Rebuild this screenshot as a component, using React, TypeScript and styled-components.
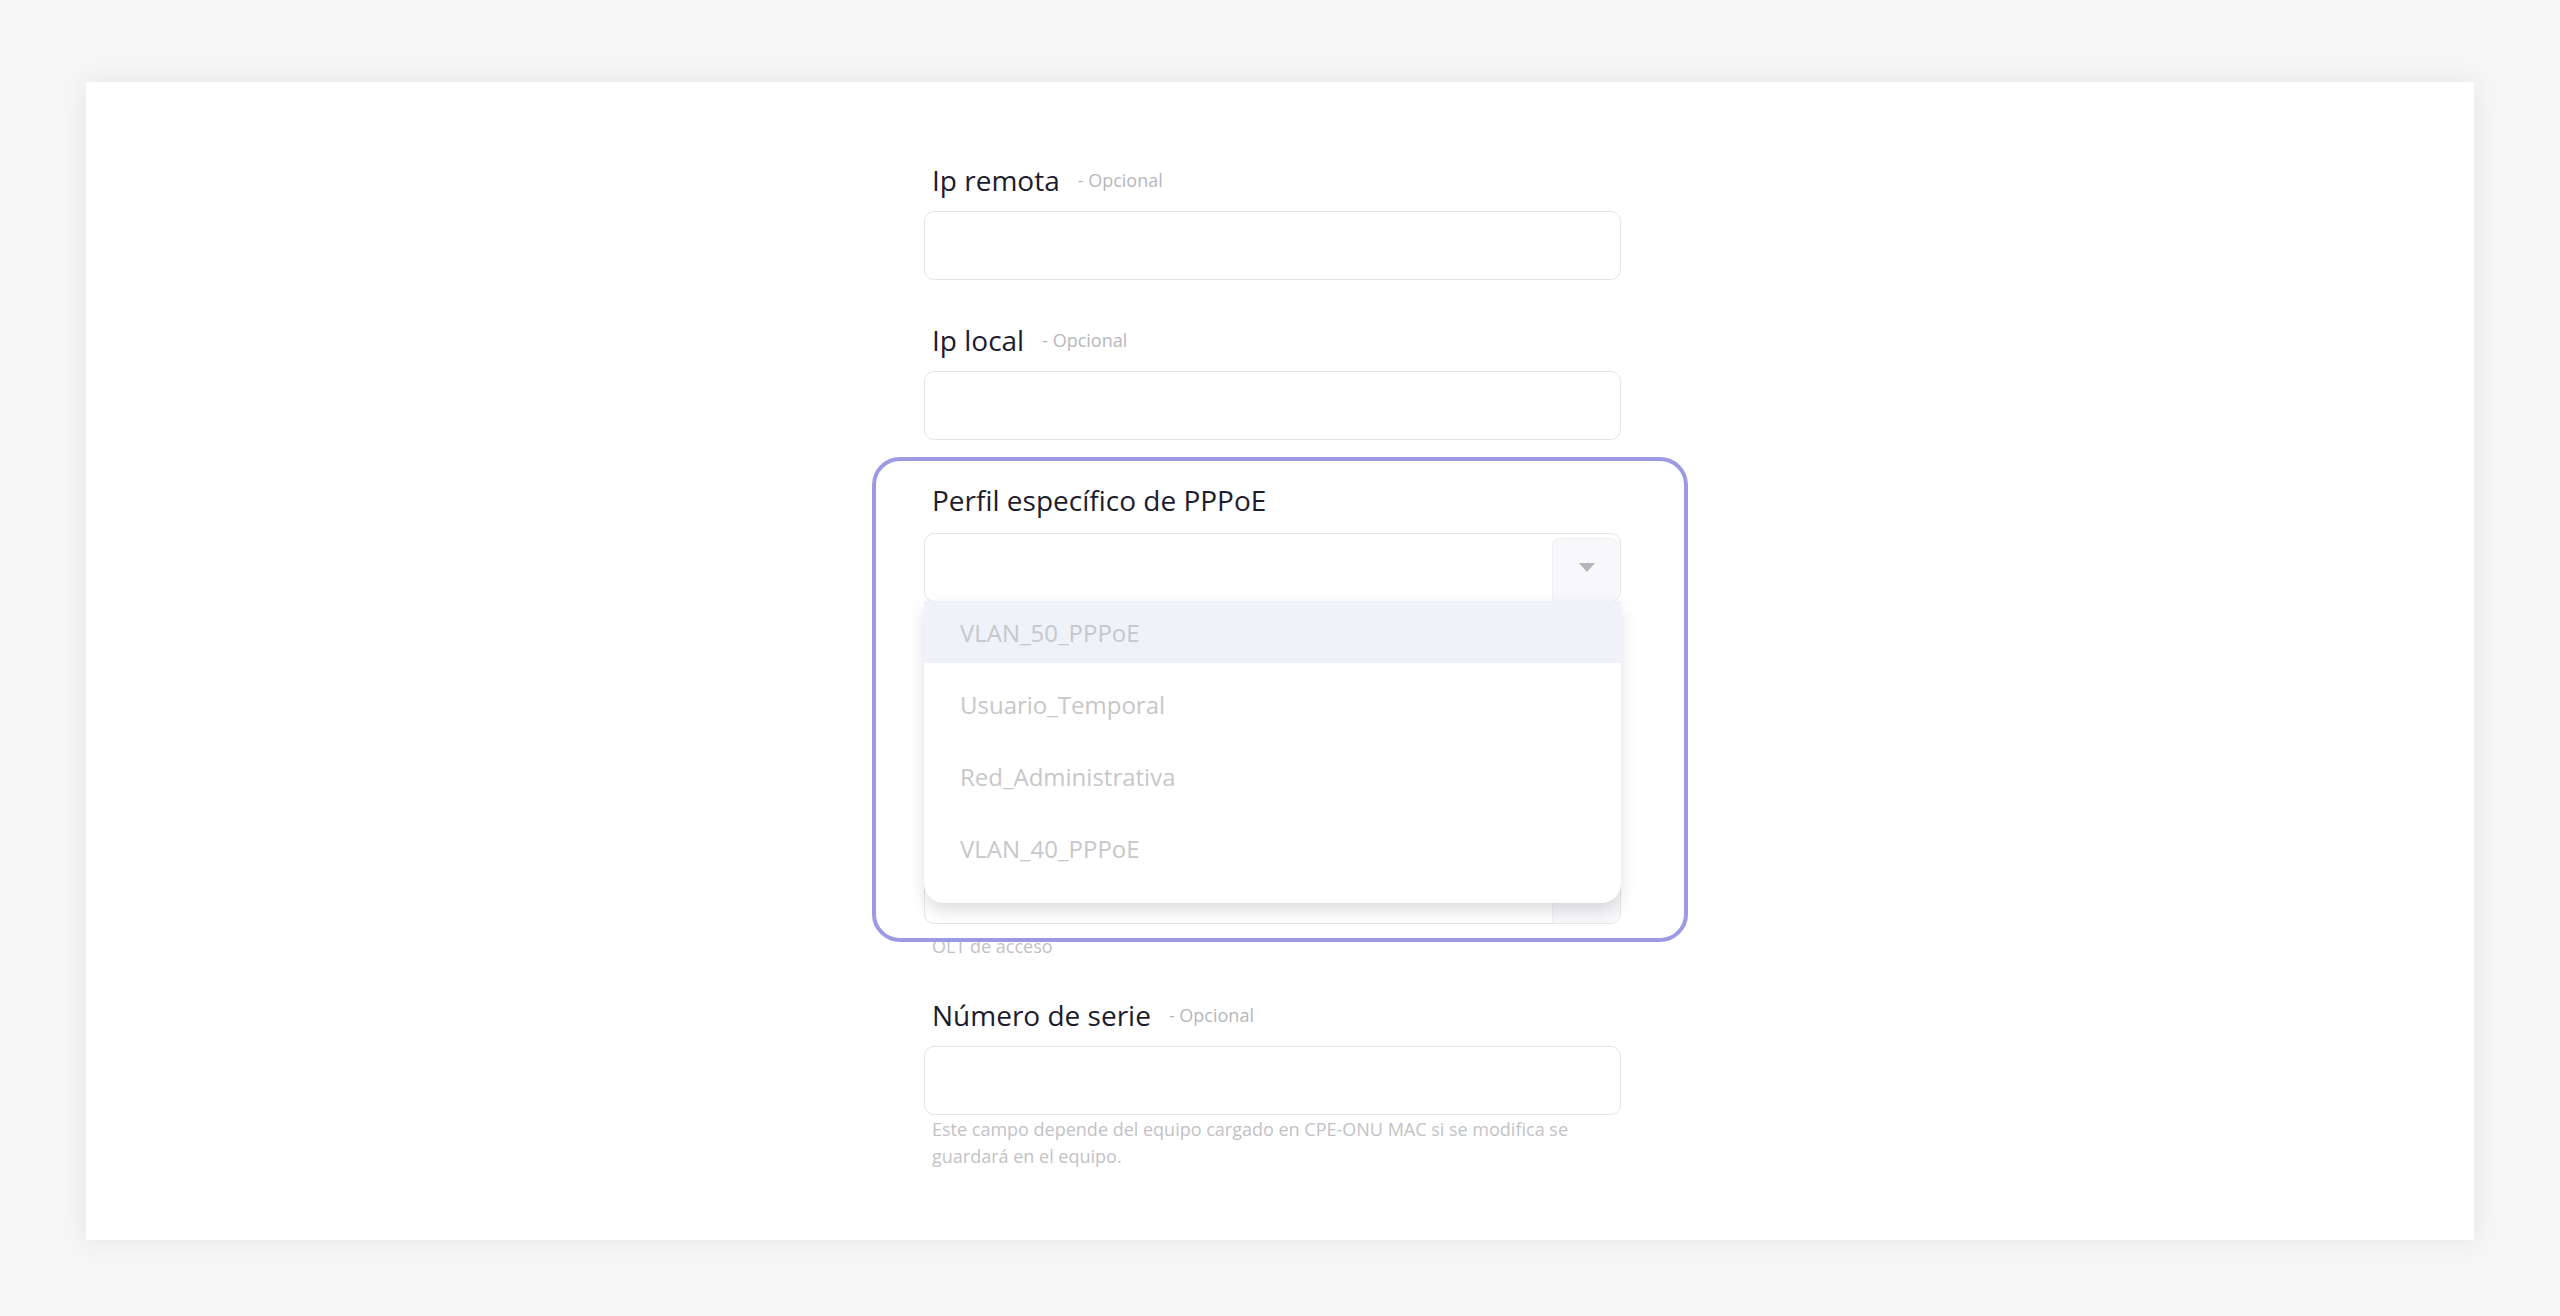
import React, { FC } from "react";
import styled, { createGlobalStyle } from "styled-components";

const GlobalStyle = createGlobalStyle`
    body {
        margin: 0;
        background-color: #f6f6f6;
        font-family: "Open Sans", "Noto Sans", sans-serif;
    }
`;

const Page = styled.div`
    box-sizing: border-box;
    min-height: 100vh;
    padding: 82px 0 0 86px;
`;

const Card = styled.div`
    box-sizing: border-box;
    width: 2388px;
    height: 1158px;
    padding: 77px 0 0 838px;
    background-color: #fff;
    box-shadow: 0 0 26px rgba(0, 0, 0, 0.07);
`;

const Form = styled.div`
    display: flex;
    flex-direction: column;
    width: 697px;
`;

interface FieldProps {
    $spacing?: number;
}

const Field = styled.div<FieldProps>`
    position: relative;
    padding-bottom: ${props => props.$spacing ?? 40}px;
`;

const LabelRow = styled.div<{ $gap?: number }>`
    display: flex;
    align-items: center;
    gap: 18px;
    height: 42px;
    margin-bottom: ${props => props.$gap ?? 10}px;
    padding-left: 8px;
`;

const LabelText = styled.span`
    font-size: 28px;
    line-height: 42px;
    color: #1d1c2d;
`;

const Optional = styled.span`
    font-size: 18px;
    line-height: 27px;
    color: #b7b7bc;
`;

const TextInput = styled.input`
    box-sizing: border-box;
    display: block;
    width: 100%;
    height: 69px;
    margin: 0;
    padding: 0 20px;
    border: 1px solid #e4e4e9;
    border-radius: 10px;
    background-color: #fff;
    outline: none;
`;

const SelectBox = styled.div`
    position: relative;
    box-sizing: border-box;
    display: flex;
    height: 69px;
    border: 1px solid #e4e4e9;
    border-radius: 10px;
    background-color: #fff;
`;

const SelectValue = styled.div`
    flex: 1;
`;

const ArrowPanel = styled.div`
    display: flex;
    align-items: center;
    justify-content: center;
    width: 68px;
    margin-top: 4px;
    padding-bottom: 6px;
    box-sizing: border-box;
    background-color: #f8f8fb;
    border-left: 1px solid #efeff3;
    border-top: 1px solid #efeff3;
    border-radius: 8px 10px 10px 0;
`;

const Menu = styled.div`
    position: absolute;
    top: 100%;
    left: -1px;
    right: -1px;
    z-index: 2;
    display: flex;
    flex-direction: column;
    gap: 10px;
    padding-bottom: 24px;
    background-color: #fff;
    border-radius: 0 0 20px 20px;
    box-shadow: 0 8px 16px rgba(0, 0, 0, 0.13);
`;

interface MenuItemProps {
    $active?: boolean;
}

const MenuItem = styled.div<MenuItemProps>`
    display: flex;
    align-items: center;
    height: 62px;
    padding-left: 36px;
    font-size: 24px;
    color: #c7c7cb;
    background-color: ${props => props.$active ? '#eff2f9' : 'transparent'};
`;

const HelpText = styled.div<{ $gap: number }>`
    margin-top: ${props => props.$gap}px;
    padding-left: 8px;
    padding-right: 20px;
    font-size: 18px;
    line-height: 27px;
    color: #c2c2c6;
`;

const Highlight = styled.div`
    position: absolute;
    top: -22px;
    left: -52px;
    z-index: 3;
    box-sizing: border-box;
    width: 816px;
    height: 485px;
    border: 4px solid #9c9ae3;
    border-radius: 28px;
    pointer-events: none;
`;

const Arrow: FC = () => (
    <svg width="16" height="9" viewBox="0 0 16 9">
        <path d="M0 0 H16 L8 9 Z" fill="#b4b4b9" />
    </svg>
);

interface LabelProps {
    text?: string;
    optional?: boolean;
    gap?: number;
}

const Label: FC<LabelProps> = ({ text, optional, gap }) => (
    <LabelRow $gap={gap}>
        {text && <LabelText>{text}</LabelText>}
        {optional && <Optional>- Opcional</Optional>}
    </LabelRow>
);

const options = ["VLAN_50_PPPoE", "Usuario_Temporal", "Red_Administrativa", "VLAN_40_PPPoE"];

const App: FC = () => {
    return <>
        <GlobalStyle />
        <Page>
            <Card>
                <Form>
                    <Field $spacing={39}>
                        <Label text="Ip remota" optional />
                        <TextInput />
                    </Field>
                    <Field $spacing={39}>
                        <Label text="Ip local" optional />
                        <TextInput />
                    </Field>
                    <Field>
                        <Highlight />
                        <Label text="Perfil específico de PPPoE" gap={12} />
                        <SelectBox>
                            <SelectValue />
                            <ArrowPanel><Arrow /></ArrowPanel>
                            <Menu>
                                {options.map((option, index) => (
                                    <MenuItem key={option} $active={index === 0}>{option}</MenuItem>
                                ))}
                            </Menu>
                        </SelectBox>
                    </Field>
                    {/* fields covered by the open menu */}
                    <Field>
                        <Label />
                        <TextInput />
                    </Field>
                    <Field $spacing={34}>
                        <Label />
                        <SelectBox>
                            <SelectValue />
                            <ArrowPanel><Arrow /></ArrowPanel>
                        </SelectBox>
                        <HelpText $gap={9}>OLT de acceso</HelpText>
                    </Field>
                    <Field>
                        <Label text="Número de serie" optional />
                        <TextInput />
                        <HelpText $gap={1}>
                            Este campo depende del equipo cargado en CPE-ONU MAC si se modifica se guardará en el equipo.
                        </HelpText>
                    </Field>
                </Form>
            </Card>
        </Page>
    </>;
};

export default App;
